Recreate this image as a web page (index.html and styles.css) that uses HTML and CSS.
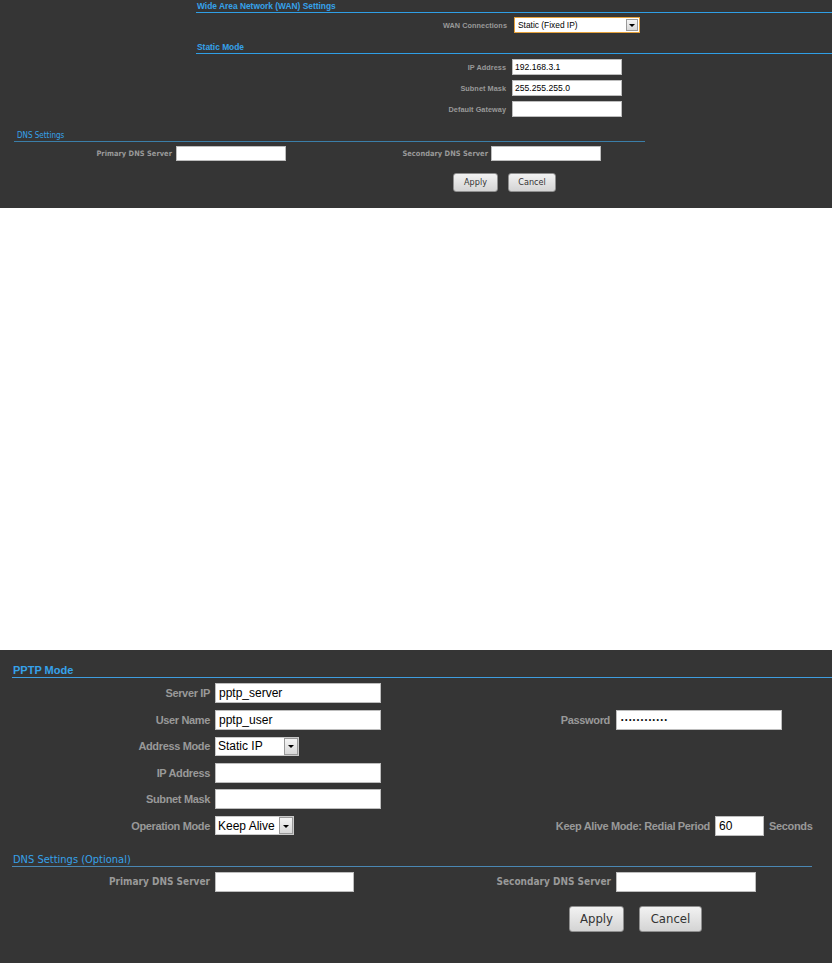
FILE: index.html
```html
<!DOCTYPE html>
<html lang="en">

<head>
  <meta charset='utf-8'>
  <title>WAN Settings</title>
  <link rel="stylesheet" href="styles.css">
</head>

<body>
  <!-- static ip panel -->
  <div class='panel top'>
    <div class='wan'>
      <div class='head'>Wide Area Network (WAN) Settings</div>
      <div class='row first'>
        <div class='lbl'>WAN Connections</div>
        <div class='sel focus'><span class='val'>Static (Fixed IP)</span><span class='arrow'></span></div>
      </div>
      <div class='head mode'>Static Mode</div>
      <div class='row ip'>
        <div class='lbl'>IP Address</div>
        <div class='inp'>192.168.3.1</div>
      </div>
      <div class='row ip'>
        <div class='lbl'>Subnet Mask</div>
        <div class='inp'>255.255.255.0</div>
      </div>
      <div class='row ip'>
        <div class='lbl'>Default Gateway</div>
        <div class='inp'></div>
      </div>
    </div>
    <div class='dns'>
      <div class='head'>DNS Settings</div>
      <div class='row'>
        <div class='lbl l1'>Primary DNS Server</div>
        <div class='inp'></div>
        <div class='lbl l2'>Secondary DNS Server</div>
        <div class='inp'></div>
      </div>
    </div>
    <div class='btns'>
      <div class='btn apply'>Apply</div>
      <div class='btn cancel'>Cancel</div>
    </div>
  </div>

  <!-- pptp panel -->
  <div class='panel bottom'>
    <div class='head pptp'>PPTP Mode</div>
    <div class='rows'>
      <div class='row'>
        <div class='lbl'>Server IP</div>
        <div class='inp'>pptp_server</div>
      </div>
      <div class='row'>
        <div class='lbl'>User Name</div>
        <div class='inp'>pptp_user</div>
        <div class='lbl pw'>Password</div>
        <div class='inp pwd'>••••••••••••</div>
      </div>
      <div class='row'>
        <div class='lbl'>Address Mode</div>
        <div class='sel addr'><span class='val'>Static IP</span><span class='arrow'></span></div>
      </div>
      <div class='row'>
        <div class='lbl'>IP Address</div>
        <div class='inp'></div>
      </div>
      <div class='row'>
        <div class='lbl'>Subnet Mask</div>
        <div class='inp'></div>
      </div>
      <div class='row'>
        <div class='lbl'>Operation Mode</div>
        <div class='sel oper'><span class='val'>Keep Alive</span><span class='arrow'></span></div>
        <div class='lbl ka'>Keep Alive Mode: Redial Period</div>
        <div class='inp sec'>60</div>
        <div class='unit'>Seconds</div>
      </div>
    </div>
    <div class='head dnsopt'>DNS Settings (Optional)</div>
    <div class='row dnsrow'>
      <div class='lbl'>Primary DNS Server</div>
      <div class='inp'></div>
      <div class='lbl l2'>Secondary DNS Server</div>
      <div class='inp'></div>
    </div>
    <div class='btns'>
      <div class='btn apply'>Apply</div>
      <div class='btn cancel'>Cancel</div>
    </div>
  </div>
</body>

</html>
```

FILE: styles.css
```css
* {
  margin: 0;
  padding: 0;
  box-sizing: border-box;
}

body {
  background: #fff;
  font-family: "Liberation Sans", Arial, sans-serif;
}

.panel {
  background: #353535;
  width: 832px;
  overflow: hidden;
}

.head {
  color: #35a2ea;
  font-weight: bold;
}

.row {
  display: flex;
  align-items: center;
}

.lbl {
  color: #999;
  font-weight: bold;
  text-align: right;
  white-space: nowrap;
}

.inp {
  background: #fff;
  border: 1px solid #bdbdbd;
  color: #000;
  white-space: nowrap;
  overflow: hidden;
}

.sel {
  background: #fff;
  border: 1px solid #c9c9c9;
  display: flex;
  align-items: center;
  color: #000;
  white-space: nowrap;
  overflow: hidden;
}

.sel .val {
  flex: 1;
}

.sel .arrow {
  flex: none;
  background: linear-gradient(#f4f4f4, #d8d8d8);
  border: 1px solid #9a9a9a;
  position: relative;
}

.sel .arrow::after {
  content: '';
  position: absolute;
  left: 50%;
  top: 50%;
  margin-left: -3px;
  margin-top: -1px;
  border-left: 3px solid transparent;
  border-right: 3px solid transparent;
  border-top: 3px solid #000;
}

.btns {
  display: flex;
}

.btn {
  background: linear-gradient(#f2f2f2, #d4d4d4);
  border: 1px solid #8f8f8f;
  border-radius: 3px;
  color: #333;
  font-family: "DejaVu Sans Condensed", "DejaVu Sans", sans-serif;
  font-stretch: condensed;
  text-align: center;
}

/* top panel */
.top {
  height: 208px;
}

.wan {
  margin-left: 196px;
}

.top .head {
  font-size: 8.4px;
  line-height: 11px;
  padding: 1px 0 0 1px;
  height: 13px;
  border-bottom: 1px solid #2f9fe6;
}

.top .head.mode {
  padding-top: 9px;
  height: 21px;
}

.top .lbl {
  font-size: 7.3px;
  letter-spacing: 0.05px;
}

.top .row.first {
  margin-top: 4px;
  height: 16px;
}

.row.first .lbl {
  width: 311px;
  margin-right: 7px;
}

.sel.focus {
  width: 126px;
  height: 16px;
  border-color: #e6a23c;
  font-size: 8.4px;
  padding-left: 3px;
}

.sel.focus .arrow {
  width: 12px;
  margin-right: 1px;
  height: 12px;
}

.top .row.ip {
  margin-top: 5px;
  height: 16px;
}

.row.ip .lbl {
  width: 310px;
  margin-right: 6px;
}

.row.ip .inp {
  width: 110px;
  height: 16px;
  font-size: 8.6px;
  line-height: 14px;
  padding-left: 2px;
}

.dns {
  margin-left: 14px;
  width: 631px;
}

.top .dns .head {
  font-weight: normal;
  font-family: "DejaVu Sans Condensed", "DejaVu Sans", sans-serif;
  font-stretch: condensed;
  font-size: 8px;
  padding: 13px 0 0 3px;
  height: 25px;
  border-bottom-color: #3b7ea8;
}

.dns .row {
  margin-top: 4px;
  height: 15px;
}

.dns .lbl {
  font-family: "DejaVu Sans Condensed", "DejaVu Sans", sans-serif;
  font-stretch: condensed;
  font-size: 7.4px;
}

.dns .l1 {
  width: 158px;
  margin-right: 4px;
}

.dns .l2 {
  width: 202px;
  margin-right: 3px;
}

.dns .inp {
  width: 110px;
  height: 15px;
}

.top .btns {
  margin: 12px 0 0 453px;
}

.top .btn {
  height: 19px;
  font-size: 9px;
  line-height: 17px;
}

.top .apply {
  width: 45px;
}

.top .cancel {
  width: 48px;
  margin-left: 10px;
}

/* bottom panel */
.bottom {
  margin-top: 442px;
  height: 313px;
}

.bottom .head {
  font-size: 11px;
  line-height: 13px;
  border-bottom: 1px solid #3f9ddf;
}

.head.pptp {
  margin-left: 12px;
  padding: 14px 0 0 1px;
  height: 28px;
}

.rows .row {
  height: 20px;
  margin-top: 6.6px;
}

.rows .row:first-child {
  margin-top: 5px;
}

.bottom .lbl {
  font-size: 11px;
  letter-spacing: -0.35px;
  width: 210px;
  margin-right: 5px;
}

.bottom .inp {
  width: 166px;
  height: 20px;
  font-size: 12px;
  line-height: 18px;
  padding-left: 3px;
}

.bottom .lbl.pw {
  width: 229px;
  margin-right: 6px;
}

.inp.pwd {
  font-size: 7px;
  letter-spacing: 1.5px;
  padding-left: 4px;
}

.bottom .sel {
  height: 19px;
  font-size: 12px;
  padding-left: 2px;
}

.bottom .sel .arrow {
  width: 14px;
  height: 17px;
}

.sel.addr {
  width: 84px;
}

.sel.oper {
  width: 79px;
}

.bottom .lbl.ka {
  width: 416px;
  margin-right: 5px;
}

.inp.sec {
  width: 49px;
}

.unit {
  color: #999;
  font-weight: bold;
  font-size: 11px;
  letter-spacing: -0.35px;
  margin-left: 5px;
}

.head.dnsopt {
  font-weight: normal;
  font-family: "DejaVu Sans Condensed", "DejaVu Sans", sans-serif;
  font-stretch: condensed;
  font-size: 11px;
  margin: 0 20px 0 12px;
  padding: 17px 0 0 1px;
  height: 31px;
  border-bottom-color: #4a87b3;
}

.dnsrow {
  margin-top: 5px;
  height: 20px;
}

.bottom .dnsrow .lbl {
  font-family: "DejaVu Sans Condensed", "DejaVu Sans", sans-serif;
  font-stretch: condensed;
  font-size: 10px;
  letter-spacing: 0;
}

.dnsrow .inp {
  width: 139px;
}

.bottom .dnsrow .lbl.l2 {
  width: 257px;
}

.dnsrow .inp:last-child {
  width: 140px;
}

.bottom .btns {
  margin: 14px 0 0 569px;
}

.bottom .btn {
  height: 26px;
  font-size: 13px;
  line-height: 24px;
}

.bottom .apply {
  width: 55px;
}

.bottom .cancel {
  width: 63px;
  margin-left: 15px;
}
```
